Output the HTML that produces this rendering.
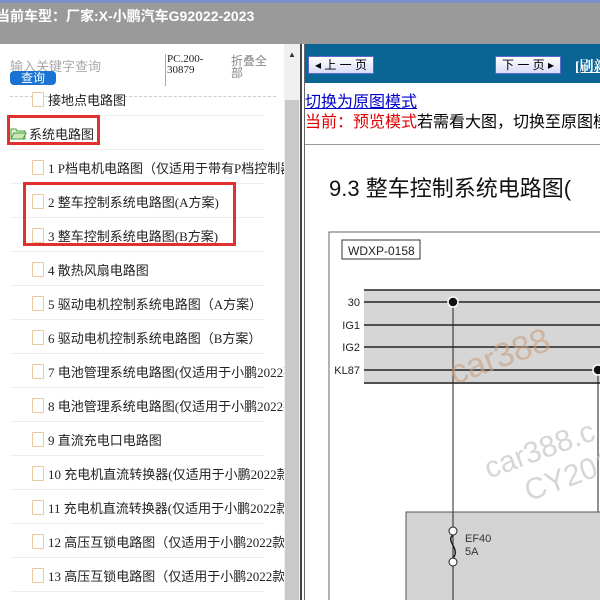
<!DOCTYPE html>
<html><head><meta charset="utf-8"><style>
*{margin:0;padding:0;box-sizing:border-box}
body{width:600px;height:600px;overflow:hidden;position:relative;background:#fff;font-family:"Liberation Serif","Noto Serif CJK SC",serif}
.top{position:absolute;left:0;top:0;width:600px;height:44px;background:#9a9a9a;border-top:3px solid #7a8fc8}
.top span{position:absolute;left:-4px;top:3px;color:#fff;font:bold 14px "Liberation Sans","Noto Sans CJK SC",sans-serif;white-space:nowrap}
.left{position:absolute;left:0;top:44px;width:284px;height:556px;background:#fff;overflow:hidden}
.sb{position:absolute;left:284px;top:44px;width:16px;height:556px;background:#f0f0f0}
.thumb{position:absolute;left:285px;top:100px;width:14px;height:500px;background:#c9c9c9}
.div{position:absolute;left:300px;top:44px;width:5px;height:556px;background:#fff;border-left:2px solid #444;border-right:1px solid #666}
.sans{font-family:"Liberation Sans","Noto Sans CJK SC",sans-serif}
.row{position:absolute;left:10px;width:300px;height:34px;font-size:13px;color:#222;white-space:nowrap}
.row:after{content:"";position:absolute;left:0;bottom:0;width:254px;border-bottom:1px solid #eee}
.row .ic{position:absolute;left:22px;top:10px;width:12px;height:15px;border:1.5px solid #e8c9a0;border-radius:1px;background:#fff}
.row .t{position:absolute;left:38px;top:8px;font-family:"Liberation Serif","Noto Sans CJK SC",sans-serif}
.red{position:absolute;border:3px solid #e03030}
.right{position:absolute;left:305px;top:44px;width:295px;overflow:hidden;height:556px}
.bar{height:39px;background:#0b6496;position:relative}
.btn{position:absolute;top:12px;height:18px;background:linear-gradient(#fff,#d8dcf8);border:1px solid #5a6ad0;font-size:12px;color:#000;text-align:center;line-height:16px;font-family:"Liberation Sans","Noto Sans CJK SC",sans-serif}
</style></head><body>
<div class="top"><span>当前车型：厂家:X-小鹏汽车G92022-2023</span></div>
<div class="left">
 <div class="sans" style="position:absolute;left:10px;top:12px;font-size:13px;color:#aaa">输入关键字查询</div>
 <div class="sans" style="position:absolute;left:10px;top:27px;width:46px;height:14px;background:#1a73d0;border-radius:4px;color:#fff;font-size:12px;line-height:14px;text-align:center">查询</div>
 <div style="position:absolute;left:165px;top:10px;font-size:11px;line-height:11px;color:#222;border-left:1px solid #aaa;padding-left:1px;height:32px">PC.200-<br>30879</div>
 <div class="sans" style="position:absolute;left:231px;top:11px;font-size:12px;line-height:12px;color:#888">折叠全<br>部</div>
 <div style="position:absolute;left:10px;top:52px;width:266px;border-top:1px dashed #ccc"></div>
 <div class="row" style="top:38px"><div class="ic"></div><div class="t">接地点电路图</div></div>
 <div class="row" style="top:72px"><svg style="position:absolute;left:0;top:11px" width="17" height="13"><path d="M1 2h5l1 2h8v8H1z" fill="#dff0d0" stroke="#4aa040"/><path d="M1 12l3-6h12l-3 6z" fill="#cde8b8" stroke="#4aa040"/></svg><div class="t sans" style="left:19px;top:8px">系统电路图</div></div>
 <div class="row" style="top:106px"><div class="ic"></div><div class="t">1 P档电机电路图（仅适用于带有P档控制器</div></div>
 <div class="row" style="top:140px"><div class="ic"></div><div class="t">2 整车控制系统电路图(A方案)</div></div>
 <div class="row" style="top:174px"><div class="ic"></div><div class="t">3 整车控制系统电路图(B方案)</div></div>
 <div class="row" style="top:208px"><div class="ic"></div><div class="t">4 散热风扇电路图</div></div>
 <div class="row" style="top:242px"><div class="ic"></div><div class="t">5 驱动电机控制系统电路图（A方案）</div></div>
 <div class="row" style="top:276px"><div class="ic"></div><div class="t">6 驱动电机控制系统电路图（B方案）</div></div>
 <div class="row" style="top:310px"><div class="ic"></div><div class="t">7 电池管理系统电路图(仅适用于小鹏2022款</div></div>
 <div class="row" style="top:344px"><div class="ic"></div><div class="t">8 电池管理系统电路图(仅适用于小鹏2022款</div></div>
 <div class="row" style="top:378px"><div class="ic"></div><div class="t">9 直流充电口电路图</div></div>
 <div class="row" style="top:412px"><div class="ic"></div><div class="t">10 充电机直流转换器(仅适用于小鹏2022款</div></div>
 <div class="row" style="top:446px"><div class="ic"></div><div class="t">11 充电机直流转换器(仅适用于小鹏2022款</div></div>
 <div class="row" style="top:480px"><div class="ic"></div><div class="t">12 高压互锁电路图（仅适用于小鹏2022款</div></div>
 <div class="row" style="top:514px"><div class="ic"></div><div class="t">13 高压互锁电路图（仅适用于小鹏2022款</div></div>
 <div class="red" style="left:7px;top:71px;width:93px;height:30px"></div>
 <div class="red" style="left:23px;top:138px;width:213px;height:64px"></div>
</div>
<div class="sb"></div><div class="thumb"></div>
<div style="position:absolute;left:288px;top:50px;font-size:8px;color:#333">▲</div>
<div class="div"></div>
<div class="right">
 <div class="bar">
  <div class="btn" style="left:3px;width:66px">◂ 上 一 页</div>
  <div class="btn" style="left:190px;width:66px">下 一 页 ▸</div>
  <div style="position:absolute;left:270px;top:12px;color:#fff;font-weight:bold;font-size:14px;text-decoration:underline;white-space:nowrap">[刷新]</div>
 </div>
 <div class="sans" style="font-size:16px;line-height:20px;margin-top:10px;white-space:nowrap">
  <div style="color:#0000cc;text-decoration:underline">切换为原图模式</div>
  <div><span style="color:#d00">当前：预览模式</span>若需看大图，切换至原图模式</div>
 </div>
 <div style="border-top:1px solid #999;margin-top:11px;height:400px;position:relative">
  <div class="sans" style="position:absolute;left:24px;top:26px;font-size:22px;color:#111;white-space:nowrap">9.3 整车控制系统电路图(</div>
  <svg style="position:absolute;left:0;top:85px" width="295" height="380" font-family="Liberation Sans,sans-serif">
   <rect x="24" y="2" width="300" height="400" fill="#fff" stroke="#666"/>
   <rect x="37" y="10" width="78" height="19" fill="#fff" stroke="#333"/>
   <text x="43" y="25" font-size="12" fill="#222">WDXP-0158</text>
   <rect x="59" y="60" width="240" height="94" fill="#d6d6d6"/>
   <line x1="59" y1="60" x2="300" y2="60" stroke="#222" stroke-width="1.5"/>
   <line x1="59" y1="153" x2="300" y2="153" stroke="#222" stroke-width="1.5"/>
   <g stroke="#222" stroke-width="1.5"><line x1="59" y1="72" x2="300" y2="72"/><line x1="59" y1="95" x2="300" y2="95"/><line x1="59" y1="117" x2="300" y2="117"/><line x1="59" y1="140" x2="300" y2="140"/></g>
   <g font-size="11" fill="#222" text-anchor="end"><text x="55" y="76">30</text><text x="55" y="99">IG1</text><text x="55" y="121">IG2</text><text x="55" y="144">KL87</text></g>
   <line x1="148" y1="72" x2="148" y2="400" stroke="#222"/>
   <line x1="293" y1="140" x2="293" y2="400" stroke="#222"/>
   <circle cx="148" cy="72" r="5" fill="#111" stroke="#fff" stroke-width="1.5"/>
   <circle cx="293" cy="140" r="5" fill="#111" stroke="#fff" stroke-width="1.5"/>
   <rect x="101" y="282" width="200" height="120" fill="#d4d4d4" stroke="#555"/>
   <line x1="148" y1="282" x2="148" y2="400" stroke="#222"/>
   <circle cx="148" cy="301" r="4" fill="#fff" stroke="#222"/>
   <circle cx="148" cy="332" r="4" fill="#fff" stroke="#222"/>
   <path d="M148 305c-8 6 8 14 0 23" fill="none" stroke="#222" stroke-width="1.5"/>
   <text x="160" y="312" font-size="11" fill="#333">EF40</text><text x="160" y="325" font-size="11" fill="#333">5A</text>
   <g fill="#bbb" opacity="0.6" font-size="30" transform="rotate(-20 230 200)"><text x="170" y="130" font-size="34" fill="#c9a080">car388</text><text x="170" y="230">car388.c</text><text x="200" y="265">CY201</text></g>
  </svg>
 </div>
</div>
</body></html>
